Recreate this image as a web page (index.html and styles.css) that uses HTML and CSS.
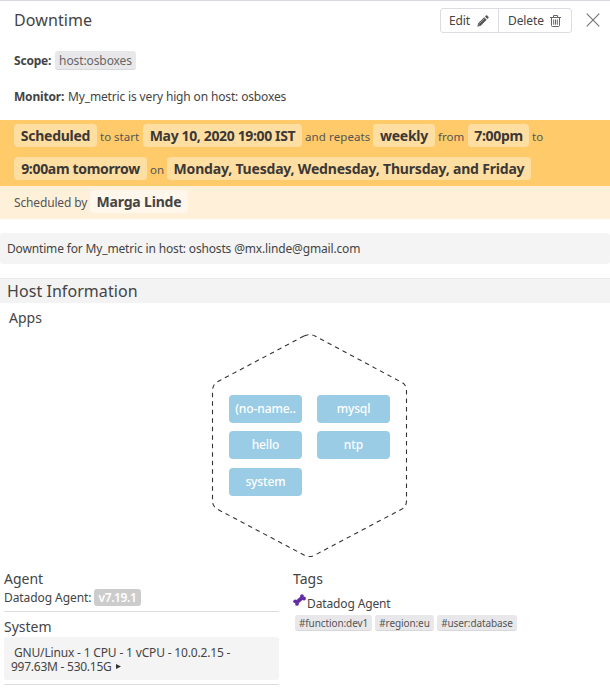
FILE: index.html
```html
<!DOCTYPE html>
<html lang="en">
<head>
<meta charset="utf-8">
<title>Downtime</title>
<link rel="stylesheet" href="styles.css">
</head>
<body>
<main class="panel">
  <header class="header">
    <h1 class="title">Downtime</h1>
    <div class="actions">
      <button class="action edit">Edit
        <svg width="12" height="12" viewBox="0 0 12 12"><path d="M.3 11.7 1.2 8.3 7.2 2.3 9.7 4.8 3.7 10.8Z M8 1.5 9 .5Q9.6 0 10.2.6L11.4 1.8Q12 2.4 11.4 3L10.4 4Z" fill="#555"/><path d="M2.5 8.5 7.5 3.5M1.4 9.3 2.7 10.6" stroke="#bbb" stroke-width=".6"/></svg>
      </button>
      <button class="action delete">Delete
        <svg width="11" height="12" viewBox="0 0 11 12" fill="none" stroke="#666" stroke-width="1"><path d="M0 2.5H11M3.5 2.3V.5H7.5V2.3M1.5 2.8V10.5Q1.5 11.5 2.5 11.5H8.5Q9.5 11.5 9.5 10.5V2.8M3.7 4.5V9.7M5.5 4.5V9.7M7.3 4.5V9.7"/></svg>
      </button>
    </div>
    <button class="close" aria-label="Close"><svg width="14" height="14" viewBox="0 0 14 14"><path d="M.7.7 13.3 13.3M13.3.7.7 13.3" stroke="#777" stroke-width="1.2"/></svg></button>
  </header>
  <div class="meta scope"><b>Scope:</b><span class="scope-chip">host:osboxes</span></div>
  <div class="meta monitor"><b>Monitor:</b><span>My_metric is very high on host: osboxes</span></div>
  <section class="schedule">
    <div class="row"><b class="pill p1">Scheduled</b><span class="w1">to start</span><b class="pill p2">May 10, 2020 19:00 IST</b><span class="w2">and repeats</span><b class="pill p3">weekly</b><span class="w3">from</span><b class="pill p4">7:00pm</b><span class="w4">to</span></div>
    <div class="row"><b class="pill p5">9:00am tomorrow</b><span class="w5">on</span><b class="pill p6">Monday, Tuesday, Wednesday, Thursday, and Friday</b></div>
  </section>
  <section class="row author"><span class="w6">Scheduled by</span><b class="pill light">Marga Linde</b></section>
  <p class="message">Downtime for My_metric in host: oshosts @mx.linde@gmail.com</p>
  <h2 class="host-title">Host Information</h2>
  <h3 class="apps-title">Apps</h3>
  <div class="hex">
    <svg class="outline" width="197" height="224" viewBox="0 0 197 224"><path d="M93 2Q98.500 -.5 104 2L191 48.500Q195.500 51 195.500 57V167Q195.500 172 191 175L104 221Q98.500 224 93 221L6 175Q1.500 172 1.500 167V57Q1.500 51 6 48Z" fill="none" stroke="#333" stroke-width="1.100" stroke-dasharray="4.500 4"/></svg>
    <div class="apps"><span>(no-name..</span><span>mysql</span><span>hello</span><span>ntp</span><span>system</span></div>
  </div>
  <div class="details">
    <div class="left">
      <h3>Agent</h3>
      <div class="version"><span>Datadog Agent:</span><b>v7.19.1</b></div>
      <h3 class="system">System</h3>
      <div class="specs"><div class="first">GNU/Linux - 1 CPU - 1 vCPU - 10.0.2.15 -</div><div class="second">997.63M - 530.15G<svg width="5" height="5" viewBox="0 0 5 5"><path d="M0 0 5 2.500 0 5Z" fill="#333"/></svg></div></div>
    </div>
    <div class="right">
      <h3>Tags</h3>
      <div class="source"><svg width="13" height="12" viewBox="0 0 13 12"><path d="M3.500 8.500 9.500 3.500" stroke="#632ca6" stroke-width="3.800"/><g fill="#632ca6"><circle cx="2.200" cy="7.300" r="1.900"/><circle cx="4" cy="9.900" r="1.900"/><circle cx="9" cy="2.100" r="1.900"/><circle cx="11" cy="4.500" r="1.900"/></g></svg><span>Datadog Agent</span></div>
      <div class="tags"><span class="t1">#function:dev1</span><span class="t2">#region:eu</span><span class="t3">#user:database</span></div>
    </div>
  </div>
</main>
</body>
</html>
```

FILE: styles.css
```css
* { box-sizing: border-box; }
body { margin: 0; background: #fff; color: #444; font: 12px/16px "Noto Sans", sans-serif; }
h1, h2, h3, p { margin: 0; font-weight: 400; }
svg { display: block; flex: none; }
button { font: inherit; color: inherit; background: none; border: 0; padding: 0; }
.panel { width: 610px; height: 695px; overflow: hidden; border-top: 1px solid #d9d9df; white-space: nowrap; }
.header { display: flex; height: 39px; padding: 0 10px 0 14px; align-items: center; }
.title { font-size: 16px; line-height: 20px; padding-bottom: 2px; flex: 1; letter-spacing: .1px; }
.actions { display: flex; height: 25px; border: 1px solid #dcdce3; border-radius: 3px; }
.action { display: flex; align-items: center; justify-content: space-between; letter-spacing: -.1px; }
.edit { width: 58px; padding: 0 9px 0 8px; border-right: 1px solid #dcdce3; }
.delete { width: 72px; padding: 0 10px 0 9px; }
.close { margin: 0 0 2px 14px; }
.meta { display: flex; align-items: center; padding-left: 14px; }
.meta b { letter-spacing: -.2px; }
.scope { height: 41px; }
.scope b { width: 41px; }
.scope-chip { width: 81px; height: 19px; line-height: 20px; text-align: center; border-radius: 3px; background: #e8e8ea; border-bottom: 1px solid #d8d8da; color: #666; letter-spacing: -.1px; }
.monitor { height: 31px; letter-spacing: -.15px; }
.monitor b { width: 54px; }
.schedule { margin-top: 8px; height: 66px; background: #ffca69; }
.row { display: flex; align-items: center; height: 33px; padding: 0 0 2px 14px; color: #555; }
.row > span { padding: 2px 0 0 3px; font-size: 11.5px; flex: none; }
.pill { flex: none; height: 23px; line-height: 23px; text-align: center; border-radius: 4px; background: #ffdea2; font-size: 14px; color: #3b3835; }
.p1 { width: 83px; letter-spacing: -.25px; }
.p2 { width: 159px; letter-spacing: -.36px; }
.p3 { width: 62px; letter-spacing: -.25px; }
.p4 { width: 61px; letter-spacing: -.3px; }
.p5 { width: 133px; letter-spacing: -.33px; }
.p6 { width: 364px; letter-spacing: -.19px; }
.w1 { width: 46px; }
.w2 { width: 71px; letter-spacing: .1px; }
.w3 { width: 33px; }
.w4 { width: 20px; }
.w5 { width: 20px; }
.author { background: #fff0da; }
.row > .w6 { padding-left: 0; font-size: 12px; width: 76px; letter-spacing: -.15px; }
.light { width: 98px; background: #fff7eb; color: #444; letter-spacing: -.18px; }
.message { margin-top: 14px; height: 31px; line-height: 31px; padding-left: 7px; background: #f4f4f4; border-radius: 3px; letter-spacing: -.16px; }
.host-title { margin-top: 14px; height: 25px; line-height: 25px; padding-left: 7px; background: #f3f3f4; border-top: 1px solid #eaeaea; font-size: 16px; letter-spacing: .06px; }
.apps-title { height: 31px; line-height: 30px; padding-left: 9px; font-size: 14px; }
.hex { display: grid; width: 197px; height: 224px; margin-left: 211px; }
.outline, .apps { grid-area: 1 / 1; }
.apps { display: grid; grid-template-columns: 73px 73px; grid-auto-rows: 28px; gap: 8.400px 15px; padding: 61px 0 0 18px; align-content: start; }
.apps span { line-height: 27px; text-align: center; color: #fff; background: #9acce5; border-radius: 4px; font-weight: 500; letter-spacing: -.1px; }
.details { display: grid; grid-template-columns: 275px 300px; gap: 14px; margin: 12px 0 0 4px; }
h3 { font-size: 14px; line-height: 18px; }
.version { display: flex; align-items: center; height: 24px; padding-bottom: 5px; border-bottom: 1px solid #ddd; }
.version span { width: 90px; padding-top: 2px; letter-spacing: -.08px; }
.version b { width: 47px; height: 17px; text-align: center; color: #fff; background: #ccc; border-radius: 3px; line-height: 18px; font-weight: 600; letter-spacing: -.4px; }
.system { margin-top: 6px; }
.specs { height: 43px; margin-top: 1px; padding: 9px 7px; line-height: 14px; background: #f4f4f4; border-radius: 3px; }
.specs .first { padding-left: 3px; letter-spacing: -.17px; }
.specs .second { letter-spacing: -.25px; }
.specs svg { display: inline-block; margin-left: 4px; vertical-align: 2px; }
.left::after { content: ""; display: block; margin-top: 4px; border-top: 1px solid #ddd; }
.source { display: flex; height: 25px; padding-top: 6px; }
.source span { padding: 2px 0 0 1px; line-height: 16px; letter-spacing: -.13px; }
.tags { display: flex; gap: 3px; margin: 2px 0 0 2px; }
.tags span { height: 16px; line-height: 16px; text-align: center; font-size: 10px; letter-spacing: -.1px; color: #555; background: #e8e8ea; border-bottom: 1px solid #d8d8da; border-radius: 3px; }
.tags .t1 { width: 77px; }
.tags .t2 { width: 59px; }
.tags .t3 { width: 80px; }
```
